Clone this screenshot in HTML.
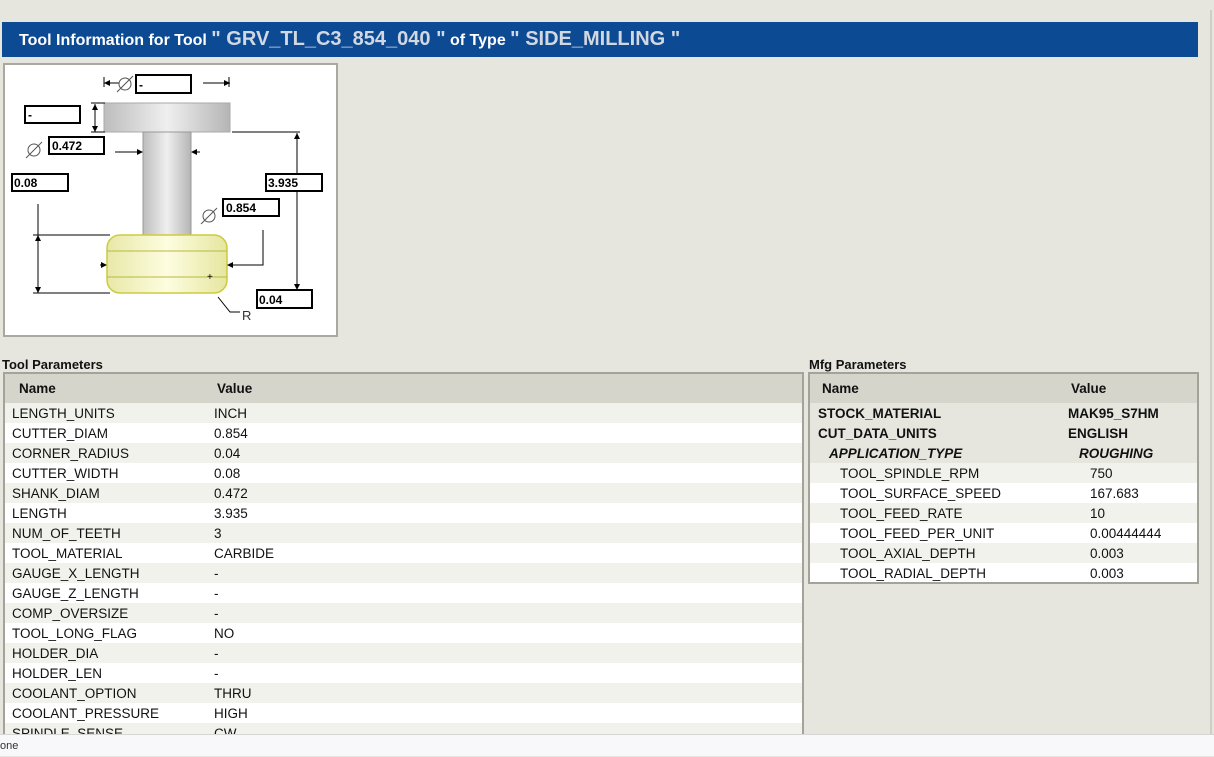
<!DOCTYPE html>
<html><head><meta charset="utf-8"><style>
*{margin:0;padding:0;box-sizing:border-box}
body{width:1214px;height:756px;overflow:hidden;background:#e6e6df;font-family:"Liberation Sans",Arial,sans-serif;position:relative;color:#111}
#title{position:absolute;left:2px;top:22px;width:1196px;height:35px;background:#0d4a94;color:#fff;font-weight:bold;font-size:16px;line-height:34px;padding-left:17px;white-space:nowrap}
#title .big{font-size:20px;color:#d2d8e2}
#pic{position:absolute;left:3px;top:63px;width:335px;height:274px;background:#fff;border:2px solid #a9a99f}
.lbl{position:absolute;font-size:13px;font-weight:bold}
.tbl{position:absolute;border:2px solid #a3a39a;background:#e6e6df;overflow:hidden}
.row{height:20px;line-height:22px;font-size:13.5px;position:relative;white-space:nowrap}
.row span{position:absolute;top:0}
.hd{height:29px;line-height:29px;background:#d5d5cc;font-weight:bold;font-size:13.5px;position:relative}
.hd span{position:absolute;top:0}
.a{background:#f2f2ec}.b{background:#fff}
#status{position:absolute;left:0;top:734px;width:1214px;height:22px;background:#f8f8fa;border-top:1px solid #d6d6d6;font-size:11px;line-height:22px;color:#333}
#vl{position:absolute;left:1210px;top:10px;width:2px;height:724px;background:#cfcfc8}
</style></head><body>
<div id="vl"></div>
<div id="title">Tool Information for Tool <span class="big">" GRV_TL_C3_854_040 "</span> of Type <span class="big">" SIDE_MILLING "</span></div>
<div id="pic">
<svg width="331" height="270" viewBox="5 65 331 270" style="position:absolute;left:0;top:0" font-family="Liberation Sans,Arial,sans-serif" font-size="12">
<defs>
<linearGradient id="g1" x1="0" x2="1"><stop offset="0" stop-color="#bdbdbd"/><stop offset=".5" stop-color="#efefef"/><stop offset="1" stop-color="#b5b5b5"/></linearGradient>
<linearGradient id="g2" x1="0" x2="1"><stop offset="0" stop-color="#e8e8a8"/><stop offset=".5" stop-color="#fdfde0"/><stop offset="1" stop-color="#e6e6a0"/></linearGradient>
</defs>
<rect x="104" y="103" width="126" height="29" fill="url(#g1)" stroke="#aaa"/>
<rect x="143" y="132" width="48" height="103" fill="url(#g1)" stroke="#999"/>
<rect x="107" y="235" width="120" height="58" rx="13" fill="url(#g2)" stroke="#cccc40" stroke-width="1.5"/>
<line x1="107" y1="251" x2="227" y2="251" stroke="#b8b840"/>
<line x1="107" y1="277" x2="227" y2="277" stroke="#b8b840"/>
<text x="207" y="280" font-size="10">+</text>
<g stroke="#000" fill="none" stroke-width="1">
<path d="M104 83h15 M203 83h27 M104 77v10 M229 77v10"/>
<path d="M95 104v28 M91 103h14 M91 132h14"/>
<path d="M115 152h26 M200 152h-8"/>
<path d="M232 132h68 M297 133v40 M297 191v99 M260 292h48"/>
<path d="M38 204v89 M33 235h77 M33 293h77"/>
<path d="M100 265h6 M263 230v35h-33"/>
<path d="M218 297l12 15h10"/>
</g>
<g fill="#000"><path d="M104 83l6-3v6z M230 83l-6-3v6z M95 104l-3 6h6z M95 132l-3-6h6z M143 152l-6-3v6z M191 152l6-3v6z M297 133l-3 6h6z M297 290l-3-6h6z M38 235l-3 6h6z M38 293l-3-6h6z M107 265l-6-3v6z M227 265l6-3v6z"/></g>
<g stroke="#555" fill="none"><circle cx="125" cy="84" r="6"/><path d="M117 92l16-16"/><circle cx="34" cy="150" r="6"/><path d="M26 158l16-16"/><circle cx="209" cy="216" r="6"/><path d="M201 224l16-16"/></g>
<text x="242" y="320" fill="#333" font-size="13">R</text>
<g stroke="#000" stroke-width="2" fill="#fff">
<rect x="136" y="75" width="55" height="18"/><rect x="25" y="106" width="55" height="17"/><rect x="49" y="137" width="55" height="17"/><rect x="12" y="174" width="56" height="17"/><rect x="266" y="174" width="56" height="17"/><rect x="223" y="199" width="56" height="17"/><rect x="257" y="290" width="55" height="18"/>
</g>
<g font-weight="bold" font-size="12"><text x="139" y="89">-</text><text x="28" y="119">-</text><text x="52" y="150">0.472</text><text x="14" y="187">0.08</text><text x="268" y="187">3.935</text><text x="226" y="212">0.854</text><text x="259" y="304">0.04</text></g>
</svg>
</div>
<div class="lbl" style="left:2px;top:357px">Tool Parameters</div>
<div class="lbl" style="left:809px;top:357px">Mfg Parameters</div>
<div class="tbl" style="left:3px;top:372px;width:801px;height:370px">
<div class="hd"><span style="left:14px">Name</span><span style="left:212px">Value</span></div>
<div class="row a"><span style="left:7px">LENGTH_UNITS</span><span style="left:209px">INCH</span></div>
<div class="row b"><span style="left:7px">CUTTER_DIAM</span><span style="left:209px">0.854</span></div>
<div class="row a"><span style="left:7px">CORNER_RADIUS</span><span style="left:209px">0.04</span></div>
<div class="row b"><span style="left:7px">CUTTER_WIDTH</span><span style="left:209px">0.08</span></div>
<div class="row a"><span style="left:7px">SHANK_DIAM</span><span style="left:209px">0.472</span></div>
<div class="row b"><span style="left:7px">LENGTH</span><span style="left:209px">3.935</span></div>
<div class="row a"><span style="left:7px">NUM_OF_TEETH</span><span style="left:209px">3</span></div>
<div class="row b"><span style="left:7px">TOOL_MATERIAL</span><span style="left:209px">CARBIDE</span></div>
<div class="row a"><span style="left:7px">GAUGE_X_LENGTH</span><span style="left:209px">-</span></div>
<div class="row b"><span style="left:7px">GAUGE_Z_LENGTH</span><span style="left:209px">-</span></div>
<div class="row a"><span style="left:7px">COMP_OVERSIZE</span><span style="left:209px">-</span></div>
<div class="row b"><span style="left:7px">TOOL_LONG_FLAG</span><span style="left:209px">NO</span></div>
<div class="row a"><span style="left:7px">HOLDER_DIA</span><span style="left:209px">-</span></div>
<div class="row b"><span style="left:7px">HOLDER_LEN</span><span style="left:209px">-</span></div>
<div class="row a"><span style="left:7px">COOLANT_OPTION</span><span style="left:209px">THRU</span></div>
<div class="row b"><span style="left:7px">COOLANT_PRESSURE</span><span style="left:209px">HIGH</span></div>
<div class="row a"><span style="left:7px">SPINDLE_SENSE</span><span style="left:209px">CW</span></div>
</div>
<div class="tbl" style="left:808px;top:372px;width:391px;height:212px">
<div class="hd"><span style="left:12px">Name</span><span style="left:261px">Value</span></div>
<div class="row" style="font-weight:bold"><span style="left:8px">STOCK_MATERIAL</span><span style="left:258px">MAK95_S7HM</span></div>
<div class="row" style="font-weight:bold"><span style="left:8px">CUT_DATA_UNITS</span><span style="left:258px">ENGLISH</span></div>
<div class="row" style="font-weight:bold;font-style:italic"><span style="left:19px">APPLICATION_TYPE</span><span style="left:269px">ROUGHING</span></div>
<div class="row a"><span style="left:30px">TOOL_SPINDLE_RPM</span><span style="left:280px">750</span></div>
<div class="row b"><span style="left:30px">TOOL_SURFACE_SPEED</span><span style="left:280px">167.683</span></div>
<div class="row a"><span style="left:30px">TOOL_FEED_RATE</span><span style="left:280px">10</span></div>
<div class="row b"><span style="left:30px">TOOL_FEED_PER_UNIT</span><span style="left:280px">0.00444444</span></div>
<div class="row a"><span style="left:30px">TOOL_AXIAL_DEPTH</span><span style="left:280px">0.003</span></div>
<div class="row b"><span style="left:30px">TOOL_RADIAL_DEPTH</span><span style="left:280px">0.003</span></div>
</div>
<div id="status">one</div>
</body></html>
